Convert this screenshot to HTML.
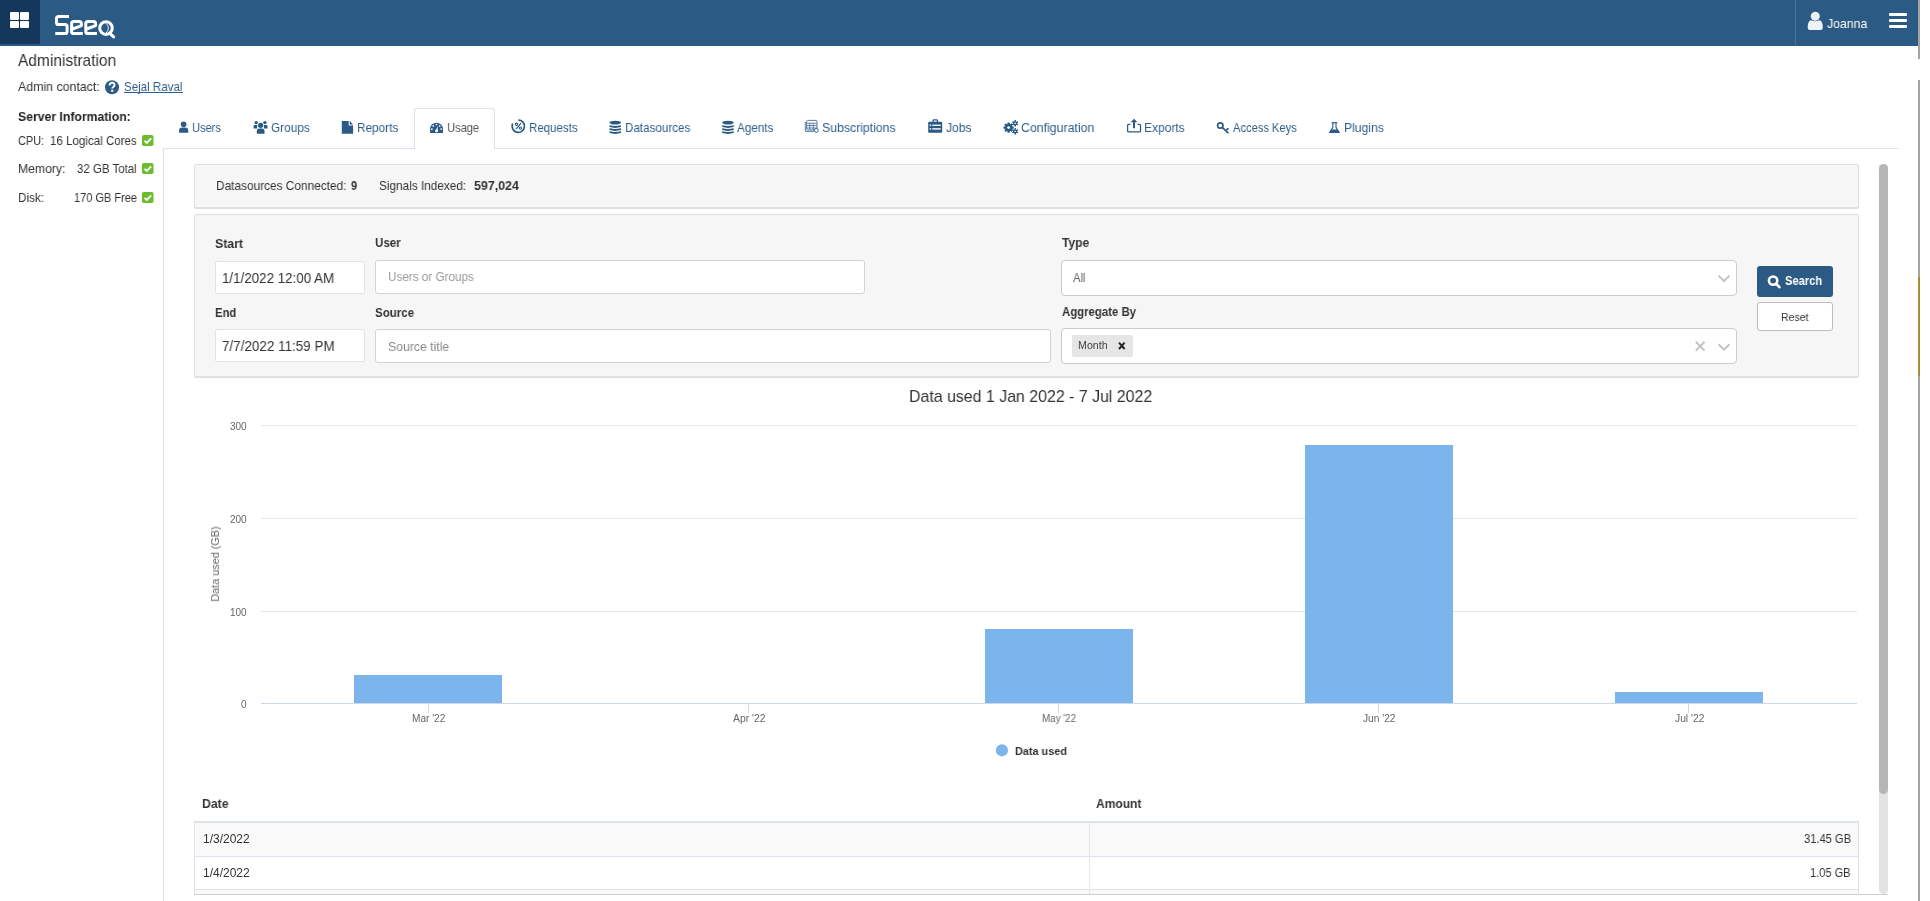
<!DOCTYPE html><html><head><meta charset="utf-8"><style>
html,body{margin:0;padding:0;background:#fff;width:1930px;height:901px;overflow:hidden;position:relative}
body{font-family:"Liberation Sans",sans-serif}
.t{position:absolute;white-space:nowrap;line-height:20px;transform-origin:0 0;will-change:transform;font-family:"Liberation Sans",sans-serif}
svg{overflow:visible}
</style></head><body>
<div style="position:absolute;left:0px;top:0px;width:1918px;height:46px;background:#2b5b84"></div>
<div style="position:absolute;left:0px;top:0px;width:40px;height:44px;background:#13385c"></div>
<div style="position:absolute;left:10px;top:12px;width:9px;height:8px;background:#fff;border-radius:1px"></div>
<div style="position:absolute;left:20px;top:12px;width:9px;height:8px;background:#fff;border-radius:1px"></div>
<div style="position:absolute;left:10px;top:21px;width:9px;height:7px;background:#fff;border-radius:1px"></div>
<div style="position:absolute;left:20px;top:21px;width:9px;height:7px;background:#fff;border-radius:1px"></div>
<svg style="position:absolute;left:0;top:0" width="130" height="46" viewBox="0 0 130 46">
<g fill="none" stroke="#fff" stroke-width="3" stroke-linejoin="round">
<path d="M69,16.6 H58.6 Q56.5,16.6 56.5,18.7 V22.4 Q56.5,24.5 58.6,24.5 H65 Q67.1,24.5 67.1,26.6 V31.4 Q67.1,33.5 65,33.5 H55.3" stroke-linejoin="miter"/>
<path d="M82.8,33.6 H73.8 Q71.6,33.6 71.6,31.4 V23.8 Q71.6,21.6 73.8,21.6 H79.2 Q81.4,21.6 81.4,23.8 V25.6 L72.5,29" />
<path d="M97,33.6 H88 Q85.8,33.6 85.8,31.4 V23.8 Q85.8,21.6 88,21.6 H93.4 Q95.6,21.6 95.6,23.8 V25.6 L86.7,29" />
<circle cx="106" cy="28.1" r="6.3"/>
<path d="M109.6,33.2 L113.6,36.9" stroke-linecap="round"/>
</g>
<path d="M106.2,23.3 Q110.6,28.1 106.2,33" fill="none" stroke="#fff" stroke-width="0.9"/>
</svg>
<div style="position:absolute;left:1795px;top:0px;width:1px;height:46px;background:#4d7598"></div>
<svg style="position:absolute;left:0;top:0" width="1930" height="46" viewBox="0 0 1930 46">
<circle cx="1815.3" cy="16.2" r="4.5" fill="#eef3f5"/>
<path d="M1807.7,27.8 Q1807.7,20.6 1811.3,20.2 Q1815.3,22.4 1819.2,20.2 Q1822.8,20.6 1822.8,27.8 Q1822.8,30.1 1820.6,30.1 H1809.9 Q1807.7,30.1 1807.7,27.8Z" fill="#eef3f5"/>
</svg>
<div class="t" style="left:1827.00px;top:14px;font-size:13.0px;color:#fff;transform:scaleX(0.9422);">Joanna</div>
<div style="position:absolute;left:1889px;top:13px;width:18px;height:3px;background:#fff;border-radius:1px"></div>
<div style="position:absolute;left:1889px;top:19px;width:18px;height:3px;background:#fff;border-radius:1px"></div>
<div style="position:absolute;left:1889px;top:25px;width:18px;height:3px;background:#fff;border-radius:1px"></div>
<div style="position:absolute;left:1918px;top:0px;width:2px;height:59px;background:#a3a3a3"></div>
<div style="position:absolute;left:1918px;top:80px;width:2px;height:197px;background:#a3a3a3"></div>
<div style="position:absolute;left:1918px;top:277px;width:2px;height:99px;background:#a38d35"></div>
<div style="position:absolute;left:1918px;top:376px;width:2px;height:525px;background:#a3a3a3"></div>
<div class="t" style="left:18.30px;top:51px;font-size:17.0px;color:#333;transform:scaleX(0.9117);">Administration</div>
<div class="t" style="left:18.30px;top:77px;font-size:13.0px;color:#333;transform:scaleX(0.9502);">Admin contact:</div>
<svg style="position:absolute;left:104px;top:79px" width="16" height="16" viewBox="0 0 16 16">
<circle cx="8" cy="8.2" r="7" fill="#2b5b84"/>
<path d="M5.6,6.4 Q5.6,3.8 8.1,3.8 Q10.5,3.8 10.5,6 Q10.5,7.3 9.2,8 Q8.3,8.5 8.3,9.6" fill="none" stroke="#fff" stroke-width="1.9"/>
<rect x="7.2" y="10.7" width="2.1" height="2.1" fill="#fff"/>
</svg>
<div class="t" style="left:124.40px;top:77px;font-size:13.0px;color:#2d5e89;transform:scaleX(0.8882);">Sejal Raval</div>
<div style="position:absolute;left:124px;top:92px;width:59px;height:1px;background:#2d5e89"></div>
<div class="t" style="left:18.30px;top:107px;font-size:13.0px;font-weight:700;color:#222;transform:scaleX(0.9399);">Server Information:</div>
<div class="t" style="left:18.30px;top:131px;font-size:13.0px;color:#333;transform:scaleX(0.8404);">CPU:</div>
<div class="t" style="left:50.00px;top:131px;font-size:13.0px;color:#333;transform:scaleX(0.8888);">16 Logical Cores</div>
<div class="t" style="left:18.30px;top:159px;font-size:13.0px;color:#333;transform:scaleX(0.9376);">Memory:</div>
<div class="t" style="left:76.60px;top:159px;font-size:13.0px;color:#333;transform:scaleX(0.8819);">32 GB Total</div>
<div class="t" style="left:18.30px;top:187.8px;font-size:13.0px;color:#333;transform:scaleX(0.9036);">Disk:</div>
<div class="t" style="left:73.80px;top:187.8px;font-size:13.0px;color:#333;transform:scaleX(0.8451);">170 GB Free</div>
<svg style="position:absolute;left:142px;top:135px" width="12" height="12" viewBox="0 0 12 12">
<rect x="0" y="0" width="11.5" height="11" rx="1.8" fill="#6cbd2e"/>
<path d="M2.6,5.8 L4.8,8 L9.2,3.4" fill="none" stroke="#fff" stroke-width="1.9"/>
</svg>
<svg style="position:absolute;left:142px;top:163px" width="12" height="12" viewBox="0 0 12 12">
<rect x="0" y="0" width="11.5" height="11" rx="1.8" fill="#6cbd2e"/>
<path d="M2.6,5.8 L4.8,8 L9.2,3.4" fill="none" stroke="#fff" stroke-width="1.9"/>
</svg>
<svg style="position:absolute;left:142px;top:192px" width="12" height="12" viewBox="0 0 12 12">
<rect x="0" y="0" width="11.5" height="11" rx="1.8" fill="#6cbd2e"/>
<path d="M2.6,5.8 L4.8,8 L9.2,3.4" fill="none" stroke="#fff" stroke-width="1.9"/>
</svg>
<div style="position:absolute;left:163px;top:148px;width:1735px;height:1px;background:#dbe1e8"></div>
<div style="position:absolute;left:163px;top:148px;width:1px;height:753px;background:#dfdfdf"></div>
<div style="position:absolute;left:414px;top:108px;width:79px;height:40px;background:#fff;border:1px solid #dbe1e8;border-bottom:none;border-radius:3px 3px 0 0"></div>
<div class="t" style="left:192.20px;top:118px;font-size:13.0px;color:#2d5e89;transform:scaleX(0.8485);">Users</div>
<div class="t" style="left:271.00px;top:118px;font-size:13.0px;color:#2d5e89;transform:scaleX(0.9079);">Groups</div>
<div class="t" style="left:356.60px;top:118px;font-size:13.0px;color:#2d5e89;transform:scaleX(0.9074);">Reports</div>
<div class="t" style="left:447.00px;top:118px;font-size:13.0px;color:#555;transform:scaleX(0.8541);">Usage</div>
<div class="t" style="left:528.70px;top:118px;font-size:13.0px;color:#2d5e89;transform:scaleX(0.8848);">Requests</div>
<div class="t" style="left:624.70px;top:118px;font-size:13.0px;color:#2d5e89;transform:scaleX(0.8947);">Datasources</div>
<div class="t" style="left:736.70px;top:118px;font-size:13.0px;color:#2d5e89;transform:scaleX(0.8970);">Agents</div>
<div class="t" style="left:822.40px;top:118px;font-size:13.0px;color:#2d5e89;transform:scaleX(0.9431);">Subscriptions</div>
<div class="t" style="left:945.80px;top:118px;font-size:13.0px;color:#2d5e89;transform:scaleX(0.9288);">Jobs</div>
<div class="t" style="left:1021.00px;top:118px;font-size:13.0px;color:#2d5e89;transform:scaleX(0.9493);">Configuration</div>
<div class="t" style="left:1144.00px;top:118px;font-size:13.0px;color:#2d5e89;transform:scaleX(0.9213);">Exports</div>
<div class="t" style="left:1232.60px;top:118px;font-size:13.0px;color:#2d5e89;transform:scaleX(0.8560);">Access Keys</div>
<div class="t" style="left:1343.70px;top:118px;font-size:13.0px;color:#2d5e89;transform:scaleX(0.9334);">Plugins</div>
<div style="position:absolute;left:194px;top:164px;width:1663px;height:42px;background:#f6f6f6;border:1px solid #e0e0e0;border-radius:2px;box-shadow:0 1px 1px rgba(0,0,0,0.14)"></div>
<div class="t" style="left:215.50px;top:176px;font-size:13.0px;color:#333;transform:scaleX(0.9114);">Datasources Connected:</div>
<div class="t" style="left:351.20px;top:176px;font-size:13.0px;font-weight:700;color:#333;transform:scaleX(0.8439);">9</div>
<div class="t" style="left:378.80px;top:176px;font-size:13.0px;color:#333;transform:scaleX(0.9072);">Signals Indexed:</div>
<div class="t" style="left:474.00px;top:176px;font-size:13.0px;font-weight:700;color:#333;transform:scaleX(0.9554);">597,024</div>
<div style="position:absolute;left:194px;top:214px;width:1663px;height:161px;background:#f6f6f6;border:1px solid #e0e0e0;border-radius:2px;box-shadow:0 1px 1px rgba(0,0,0,0.14)"></div>
<div class="t" style="left:215.40px;top:234.4px;font-size:13.0px;font-weight:700;color:#333;transform:scaleX(0.9455);">Start</div>
<div class="t" style="left:375.10px;top:232.6px;font-size:13.0px;font-weight:700;color:#333;transform:scaleX(0.8924);">User</div>
<div class="t" style="left:215.40px;top:302.5px;font-size:13.0px;font-weight:700;color:#333;transform:scaleX(0.8674);">End</div>
<div class="t" style="left:375.10px;top:303.4px;font-size:13.0px;font-weight:700;color:#333;transform:scaleX(0.8895);">Source</div>
<div class="t" style="left:1061.50px;top:233px;font-size:13.0px;font-weight:700;color:#333;transform:scaleX(0.9224);">Type</div>
<div class="t" style="left:1061.50px;top:301.8px;font-size:13.0px;font-weight:700;color:#333;transform:scaleX(0.8755);">Aggregate By</div>
<div style="position:absolute;left:215px;top:261px;width:150px;height:33px;background:#fff;border:1px solid #e3e3e3;border-radius:2px;box-sizing:border-box"></div>
<div style="position:absolute;left:215px;top:329px;width:150px;height:33px;background:#fff;border:1px solid #e3e3e3;border-radius:2px;box-sizing:border-box"></div>
<div class="t" style="left:221.80px;top:268px;font-size:14.5px;color:#333;transform:scaleX(0.9208);">1/1/2022 12:00 AM</div>
<div class="t" style="left:221.70px;top:336px;font-size:14.5px;color:#333;transform:scaleX(0.9270);">7/7/2022 11:59 PM</div>
<div style="position:absolute;left:375px;top:260px;width:490px;height:34px;background:#fff;border:1px solid #cfd4da;border-radius:3px;box-sizing:border-box"></div>
<div style="position:absolute;left:375px;top:329px;width:676px;height:34px;background:#fff;border:1px solid #cfd4da;border-radius:3px;box-sizing:border-box"></div>
<div class="t" style="left:388.20px;top:267px;font-size:13.0px;color:#999;transform:scaleX(0.8998);">Users or Groups</div>
<div class="t" style="left:388.20px;top:337px;font-size:13.0px;color:#888;transform:scaleX(0.9412);">Source title</div>
<div style="position:absolute;left:1061px;top:260px;width:676px;height:36px;background:#fff;border:1px solid #cccccc;border-radius:4px;box-sizing:border-box"></div>
<div style="position:absolute;left:1061px;top:328px;width:676px;height:36px;background:#fff;border:1px solid #cccccc;border-radius:4px;box-sizing:border-box"></div>
<div class="t" style="left:1072.50px;top:268.2px;font-size:13.0px;color:#666;transform:scaleX(0.8655);">All</div>
<div style="position:absolute;left:1072px;top:335px;width:61px;height:22px;background:#e6e6e6;border-radius:2px"></div>
<div class="t" style="left:1077.80px;top:336px;font-size:10.0px;color:#444;transform:scaleX(1.0687);">Month</div>
<div style="position:absolute;left:1757px;top:266px;width:76px;height:31px;background:#2b5b84;border-radius:3px"></div>
<div class="t" style="left:1785.00px;top:271.3px;font-size:13.0px;font-weight:700;color:#fff;transform:scaleX(0.8534);">Search</div>
<div style="position:absolute;left:1757px;top:302px;width:76px;height:29px;background:#fff;border:1px solid #bdbdbd;border-radius:3px;box-sizing:border-box"></div>
<div class="t" style="left:1781.00px;top:307px;font-size:11.5px;color:#333;transform:scaleX(0.9155);">Reset</div>
<div class="t" style="left:909.40px;top:386.8px;font-size:17.0px;color:#333;transform:scaleX(0.9357);">Data used 1 Jan 2022 - 7 Jul 2022</div>
<div style="position:absolute;left:261px;top:425px;width:1596px;height:1px;background:#e6e6e6"></div>
<div style="position:absolute;left:261px;top:518px;width:1596px;height:1px;background:#e6e6e6"></div>
<div style="position:absolute;left:261px;top:611px;width:1596px;height:1px;background:#e6e6e6"></div>
<div style="position:absolute;left:261px;top:703px;width:1596px;height:1px;background:#ccd6eb"></div>
<div style="position:absolute;left:428px;top:703px;width:1px;height:10px;background:#ccd6eb"></div>
<div style="position:absolute;left:748px;top:703px;width:1px;height:10px;background:#ccd6eb"></div>
<div style="position:absolute;left:1058px;top:703px;width:1px;height:10px;background:#ccd6eb"></div>
<div style="position:absolute;left:1378px;top:703px;width:1px;height:10px;background:#ccd6eb"></div>
<div style="position:absolute;left:1688px;top:703px;width:1px;height:10px;background:#ccd6eb"></div>
<div class="t" style="left:229.50px;top:417px;font-size:10.0px;color:#666;transform:scaleX(0.9892);">300</div>
<div class="t" style="left:229.50px;top:510px;font-size:10.0px;color:#666;transform:scaleX(0.9892);">200</div>
<div class="t" style="left:229.50px;top:602.5px;font-size:10.0px;color:#666;transform:scaleX(0.9892);">100</div>
<div class="t" style="left:240.70px;top:695px;font-size:10.0px;color:#666;transform:scaleX(0.9532);">0</div>
<div class="t" style="left:412.00px;top:709px;font-size:10.0px;color:#666;transform:scaleX(1.0082);">Mar '22</div>
<div class="t" style="left:732.50px;top:709px;font-size:10.0px;color:#666;transform:scaleX(1.0360);">Apr '22</div>
<div class="t" style="left:1042.00px;top:709px;font-size:10.0px;color:#666;transform:scaleX(0.9798);">May '22</div>
<div class="t" style="left:1363.00px;top:709px;font-size:10.0px;color:#666;transform:scaleX(1.0179);">Jun '22</div>
<div class="t" style="left:1674.80px;top:709px;font-size:10.0px;color:#666;transform:scaleX(1.0283);">Jul '22</div>
<div class="t" style="left:215.5px;top:564px;font-size:10px;color:#666;transform:translate(-50%,-50%) rotate(-90deg) scaleX(1.085);transform-origin:50% 50%;line-height:12px">Data used (GB)</div>
<div class="t" style="left:1015.00px;top:741px;font-size:11.5px;font-weight:700;color:#333;transform:scaleX(0.9462);">Data used</div>
<div class="t" style="left:202.00px;top:794px;font-size:13.0px;font-weight:700;color:#333;transform:scaleX(0.9402);">Date</div>
<div class="t" style="left:1096.30px;top:794px;font-size:13.0px;font-weight:700;color:#333;transform:scaleX(0.9246);">Amount</div>
<div style="position:absolute;left:194px;top:821px;width:1665px;height:2px;background:#dde2e7"></div>
<div style="position:absolute;left:194px;top:823px;width:1665px;height:34px;background:#f9f9f9"></div>
<div style="position:absolute;left:194px;top:856px;width:1665px;height:1px;background:#dde3ea"></div>
<div style="position:absolute;left:194px;top:857px;width:1665px;height:33px;background:#fff"></div>
<div style="position:absolute;left:194px;top:889px;width:1665px;height:1px;background:#dde3ea"></div>
<div style="position:absolute;left:194px;top:890px;width:1665px;height:5px;background:#f9f9f9"></div>
<div style="position:absolute;left:194px;top:821px;width:1px;height:74px;background:#dde2e7"></div>
<div style="position:absolute;left:1858px;top:821px;width:1px;height:74px;background:#dde2e7"></div>
<div style="position:absolute;left:1089px;top:823px;width:1px;height:72px;background:#e3e6ea"></div>
<div class="t" style="left:202.60px;top:829.2px;font-size:12.0px;color:#333;">1/3/2022</div>
<div class="t" style="left:202.60px;top:862.9px;font-size:12.0px;color:#333;">1/4/2022</div>
<div class="t" style="left:1803.60px;top:829.2px;font-size:12.0px;color:#333;transform:scaleX(0.9290);">31.45 GB</div>
<div class="t" style="left:1810.20px;top:862.9px;font-size:12.0px;color:#333;transform:scaleX(0.9199);">1.05 GB</div>
<div style="position:absolute;left:194px;top:894px;width:1694px;height:1px;background:#cfcfcf"></div>
<div style="position:absolute;left:1879px;top:164px;width:9px;height:730px;background:#e3e3e3;border-radius:5px"></div>
<div style="position:absolute;left:1879px;top:164px;width:9px;height:630px;background:#b6b6b6;border-radius:5px"></div>
<div style="position:absolute;left:1888px;top:894px;width:1px;height:1px;background:#fff"></div>
<svg style="position:absolute;left:0;top:0" width="1930" height="901" viewBox="0 0 1930 901"><g fill="#2a5a85"><circle cx="183.6" cy="124.3" r="2.8"/><path d="M179.1,132.8 V130.3 Q179.1,127.4 182,127.4 H185.3 Q188.2,127.4 188.2,130.3 V132.8Z"/><circle cx="260.6" cy="125.3" r="2.6"/><path d="M256.8,133.8 V131 Q256.8,128.5 259.3,128.5 H262 Q264.5,128.5 264.5,131 V133.8Z"/><circle cx="256.2" cy="122.6" r="1.7"/><circle cx="264.9" cy="122.6" r="1.7"/><path d="M253.6,128.4 V126.3 Q253.6,124.9 255,124.9 H257.2 V128.4Z"/><path d="M267.5,128.4 V126.3 Q267.5,124.9 266.1,124.9 H263.9 V128.4Z"/><path d="M341.8,121 H348.7 V125.5 H353.1 V133.7 H341.8Z"/><path d="M349.7,121 L353.1,124.5 H349.7Z"/><path d="M430.1,132.9 V128.6 A6.45,5.9 0 0 1 443,128.6 V132.9Z"/></g><g fill="#fff"><rect x="432.5" y="125.2" width="1.6" height="1.5"/><rect x="435.7" y="123.9" width="1.6" height="1.3"/><rect x="438.9" y="125.2" width="1.6" height="1.5"/><rect x="431" y="128.4" width="1.7" height="1.4"/><rect x="440.4" y="128.4" width="1.7" height="1.4"/><path d="M435.7,130.4 L437.9,126 L437.5,130.9Z"/><circle cx="436.6" cy="130.9" r="1.45"/></g><path d="M518.3,120 A6.2,6.2 0 1 1 512.6,123.7" fill="none" stroke="#2a5a85" stroke-width="1.7"/><g fill="none" stroke="#2a5a85" stroke-width="1.1"><circle cx="516.5" cy="124.3" r="1.15"/><circle cx="520.4" cy="128.1" r="1.15"/><path d="M521,123.2 L516,129.2" stroke-width="1.2"/></g><g fill="#2a5a85"><ellipse cx="615.25" cy="122.6" rx="5.75" ry="1.9"/><path d="M609.5,125.2 Q615.25,126.8 621.0,125.2 V127.10000000000001 Q615.25,128.7 609.5,127.10000000000001Z"/><path d="M609.5,128.2 Q615.25,129.79999999999998 621.0,128.2 V130.1 Q615.25,131.7 609.5,130.1Z"/><path d="M609.5,131.2 Q615.25,132.79999999999998 621.0,131.2 V133.1 Q615.25,134.7 609.5,133.1Z"/></g><g fill="#2a5a85"><ellipse cx="727.95" cy="122.6" rx="5.75" ry="1.9"/><path d="M722.2,125.2 Q727.95,126.8 733.7,125.2 V127.10000000000001 Q727.95,128.7 722.2,127.10000000000001Z"/><path d="M722.2,128.2 Q727.95,129.79999999999998 733.7,128.2 V130.1 Q727.95,131.7 722.2,130.1Z"/><path d="M722.2,131.2 Q727.95,132.79999999999998 733.7,131.2 V133.1 Q727.95,134.7 722.2,133.1Z"/></g><g fill="none" stroke="#2a5a85" stroke-width="0.9" opacity="0.85"><rect x="806.6" y="120.4" width="10.4" height="9.6" rx="0.8"/><path d="M806.6,123.2 H817 M806.6,125.6 H817 M806.6,128 H817 M809.8,123.2 V130 M813.2,123.2 V130"/></g><path d="M805.3,122 V131.4 H814" fill="none" stroke="#2a5a85" stroke-width="0.9" opacity="0.85"/><circle cx="816.3" cy="130.4" r="2" fill="#fff" stroke="#2a5a85" stroke-width="1" opacity="0.9"/><g fill="#2a5a85"><path d="M932.5,122 V120.6 Q932.5,119.2 933.9,119.2 H936.6 Q938,119.2 938,120.6 V122 H936.7 V120.5 H933.8 V122Z"/><rect x="928.2" y="121.8" width="14" height="10.9" rx="1"/></g><g fill="#fff"><rect x="929.6" y="124.6" width="1.6" height="1.4"/><rect x="932.3" y="124.6" width="8.4" height="1.4"/><rect x="929.6" y="128.2" width="1.6" height="1.4"/><rect x="932.3" y="128.2" width="8.4" height="1.4"/></g><circle cx="1008.6" cy="127.6" r="3.6" fill="#2a5a85"/><rect x="1007.65" y="122.7" width="1.9" height="9.8" fill="#2a5a85" transform="rotate(0.0 1008.6 127.6)"/><rect x="1007.65" y="122.7" width="1.9" height="9.8" fill="#2a5a85" transform="rotate(45.0 1008.6 127.6)"/><rect x="1007.65" y="122.7" width="1.9" height="9.8" fill="#2a5a85" transform="rotate(90.0 1008.6 127.6)"/><rect x="1007.65" y="122.7" width="1.9" height="9.8" fill="#2a5a85" transform="rotate(135.0 1008.6 127.6)"/><rect x="1007.65" y="122.7" width="1.9" height="9.8" fill="#2a5a85" transform="rotate(180.0 1008.6 127.6)"/><rect x="1007.65" y="122.7" width="1.9" height="9.8" fill="#2a5a85" transform="rotate(225.0 1008.6 127.6)"/><rect x="1007.65" y="122.7" width="1.9" height="9.8" fill="#2a5a85" transform="rotate(270.0 1008.6 127.6)"/><rect x="1007.65" y="122.7" width="1.9" height="9.8" fill="#2a5a85" transform="rotate(315.0 1008.6 127.6)"/><circle cx="1008.6" cy="127.6" r="1.4" fill="#fff"/><circle cx="1015.2" cy="123.3" r="1.8" fill="#2a5a85"/><rect x="1014.6" y="120.2" width="1.2" height="6.2" fill="#2a5a85" transform="rotate(0.0 1015.2 123.3)"/><rect x="1014.6" y="120.2" width="1.2" height="6.2" fill="#2a5a85" transform="rotate(60.0 1015.2 123.3)"/><rect x="1014.6" y="120.2" width="1.2" height="6.2" fill="#2a5a85" transform="rotate(120.0 1015.2 123.3)"/><rect x="1014.6" y="120.2" width="1.2" height="6.2" fill="#2a5a85" transform="rotate(180.0 1015.2 123.3)"/><rect x="1014.6" y="120.2" width="1.2" height="6.2" fill="#2a5a85" transform="rotate(240.0 1015.2 123.3)"/><rect x="1014.6" y="120.2" width="1.2" height="6.2" fill="#2a5a85" transform="rotate(300.0 1015.2 123.3)"/><circle cx="1015.2" cy="123.3" r="0.8" fill="#fff"/><circle cx="1015.2" cy="131.3" r="1.8" fill="#2a5a85"/><rect x="1014.6" y="128.2" width="1.2" height="6.2" fill="#2a5a85" transform="rotate(0.0 1015.2 131.3)"/><rect x="1014.6" y="128.2" width="1.2" height="6.2" fill="#2a5a85" transform="rotate(60.0 1015.2 131.3)"/><rect x="1014.6" y="128.2" width="1.2" height="6.2" fill="#2a5a85" transform="rotate(120.0 1015.2 131.3)"/><rect x="1014.6" y="128.2" width="1.2" height="6.2" fill="#2a5a85" transform="rotate(180.0 1015.2 131.3)"/><rect x="1014.6" y="128.2" width="1.2" height="6.2" fill="#2a5a85" transform="rotate(240.0 1015.2 131.3)"/><rect x="1014.6" y="128.2" width="1.2" height="6.2" fill="#2a5a85" transform="rotate(300.0 1015.2 131.3)"/><circle cx="1015.2" cy="131.3" r="0.8" fill="#fff"/><g fill="none" stroke="#2a5a85" stroke-width="1.3"><path d="M1130.5,124.4 H1128.5 Q1127.6,124.4 1127.6,125.3 V131 Q1127.6,131.9 1128.5,131.9 H1139.6 Q1140.5,131.9 1140.5,131 V125.3 Q1140.5,124.4 1139.6,124.4 H1137.6"/></g><path d="M1134,118.8 L1137.4,122.3 H1135 V128.2 H1133 V122.3 H1130.6Z" fill="#2a5a85"/><g fill="none" stroke="#2a5a85" stroke-width="1.7" stroke-linecap="round"><circle cx="1220.3" cy="125.5" r="2.7"/><path d="M1222.4,127.7 L1227.9,132.6 M1225.6,130.6 L1228,128.7"/></g><rect x="1331.6" y="122.1" width="5.6" height="1.3" fill="#2a5a85"/><path d="M1332.8,123.2 V127.4 L1329.8,132.3 H1339 L1336,127.4 V123.2" fill="none" stroke="#2a5a85" stroke-width="1.1"/><path d="M1331.3,129.4 H1337.5 L1339.8,133 H1329.1Z" fill="#2a5a85"/><g fill="none" stroke="#c4c4c4" stroke-width="2"><path d="M1718.5,275.6 L1724,281 L1729.5,275.6"/><path d="M1718.5,344.2 L1724,349.6 L1729.5,344.2"/><path d="M1695.8,341.8 L1704.6,350.6 M1704.6,341.8 L1695.8,350.6"/></g><path d="M1119,342.6 L1124.6,349 M1124.6,342.6 L1119,349" stroke="#222" stroke-width="1.9"/><g fill="none" stroke="#fff" stroke-width="2"><circle cx="1773.1" cy="280.6" r="4.2" stroke-width="2.5"/><path d="M1776.2,283.8 L1779.4,287.2" stroke-width="2.6" stroke-linecap="round"/></g><rect x="354" y="675" width="148" height="28" fill="#7cb5ec"/><rect x="985" y="629" width="148" height="74" fill="#7cb5ec"/><rect x="1305" y="445" width="148" height="258" fill="#7cb5ec"/><rect x="1615" y="692" width="148" height="11" fill="#7cb5ec"/><circle cx="1001.9" cy="750.3" r="6.1" fill="#7cb5ec"/></svg>
</body></html>
